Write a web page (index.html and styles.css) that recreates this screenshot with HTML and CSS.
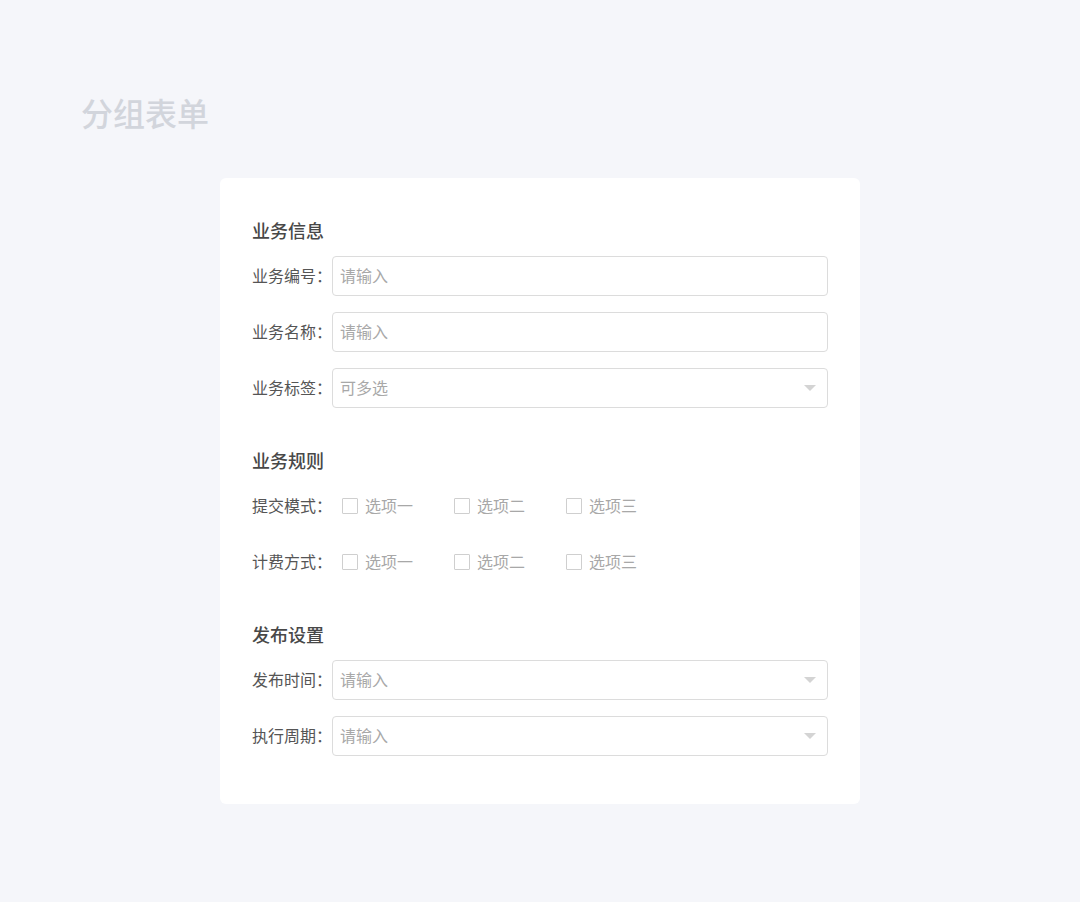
FILE: index.html
```html
<!DOCTYPE html>
<html lang="zh-CN">
<head>
<meta charset="utf-8">
<title>分组表单</title>
<link rel="stylesheet" href="styles.css">
</head>
<body>
<div class="page">
  <h1 class="page-title">分组表单</h1>
  <div class="card">
    <section class="group">
      <h2 class="group-title">业务信息</h2>
      <div class="rows">
        <div class="row">
          <label class="label">业务编号：</label>
          <div class="input"><span class="ph">请输入</span></div>
        </div>
        <div class="row">
          <label class="label">业务名称：</label>
          <div class="input"><span class="ph">请输入</span></div>
        </div>
        <div class="row">
          <label class="label">业务标签：</label>
          <div class="input select"><span class="ph">可多选</span><span class="arrow"></span></div>
        </div>
      </div>
    </section>
    <section class="group">
      <h2 class="group-title">业务规则</h2>
      <div class="rows">
        <div class="row">
          <label class="label">提交模式：</label>
          <div class="checks">
            <span class="check"><span class="box"></span><span class="ctext">选项一</span></span>
            <span class="check"><span class="box"></span><span class="ctext">选项二</span></span>
            <span class="check"><span class="box"></span><span class="ctext">选项三</span></span>
          </div>
        </div>
        <div class="row">
          <label class="label">计费方式：</label>
          <div class="checks">
            <span class="check"><span class="box"></span><span class="ctext">选项一</span></span>
            <span class="check"><span class="box"></span><span class="ctext">选项二</span></span>
            <span class="check"><span class="box"></span><span class="ctext">选项三</span></span>
          </div>
        </div>
      </div>
    </section>
    <section class="group">
      <h2 class="group-title">发布设置</h2>
      <div class="rows">
        <div class="row">
          <label class="label">发布时间：</label>
          <div class="input select"><span class="ph">请输入</span><span class="arrow"></span></div>
        </div>
        <div class="row">
          <label class="label">执行周期：</label>
          <div class="input select"><span class="ph">请输入</span><span class="arrow"></span></div>
        </div>
      </div>
    </section>
  </div>
</div>
</body>
</html>
```

FILE: styles.css
```css
html, body {
  margin: 0;
  padding: 0;
  background: #f5f6fa;
  font-family: "Noto Sans CJK SC", "Noto Sans", sans-serif;
}
.page {
  width: 1080px;
  min-height: 902px;
  padding-top: 92px;
  box-sizing: border-box;
}
.page-title {
  margin: 0 0 46px 81px;
  font-size: 32px;
  line-height: 40px;
  font-weight: 500;
  color: #d2d5dc;
}
.card {
  width: 640px;
  margin: 0 auto;
  background: #ffffff;
  border-radius: 6px;
  padding: 40px 32px 48px;
  box-sizing: border-box;
}
.group + .group {
  margin-top: 40px;
}
.group-title {
  margin: 0 0 14px;
  font-size: 18px;
  line-height: 24px;
  font-weight: 500;
  color: #484848;
}
.rows {
  display: flex;
  flex-direction: column;
  gap: 16px;
}
.row {
  display: flex;
  align-items: center;
  height: 40px;
}
.label {
  width: 80px;
  flex: none;
  font-size: 16px;
  line-height: 22px;
  margin-top: -2px;
  color: #555555;
  white-space: nowrap;
  overflow: hidden;
}
.input {
  flex: 1;
  height: 40px;
  box-sizing: border-box;
  border: 1px solid #dcdcdc;
  border-radius: 4px;
  padding: 0 11px 0 7px;
  display: flex;
  align-items: center;
  justify-content: space-between;
}
.ph {
  font-size: 16px;
  line-height: 22px;
  margin-top: -2px;
  color: #a8a8a8;
}
.arrow {
  width: 0;
  height: 0;
  border-left: 6px solid transparent;
  border-right: 6px solid transparent;
  border-top: 6px solid #d4d4d4;
}
.checks {
  display: flex;
  padding-left: 10px;
}
.check {
  display: flex;
  align-items: center;
  width: 112px;
}
.box {
  width: 14px;
  height: 14px;
  border: 1px solid #cfcfcf;
  border-radius: 1px;
  margin-right: 7px;
}
.ctext {
  font-size: 16px;
  line-height: 22px;
  margin-top: -2px;
  color: #a8a8a8;
}
```
